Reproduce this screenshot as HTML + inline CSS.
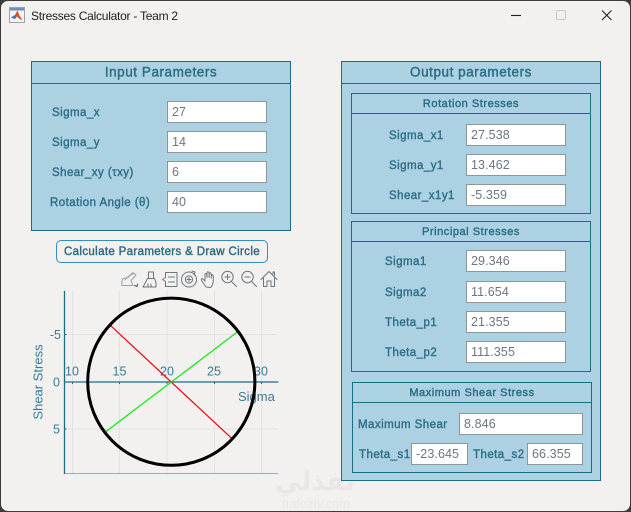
<!DOCTYPE html>
<html><head><meta charset="utf-8">
<style>
html,body{margin:0;padding:0;width:631px;height:512px;overflow:hidden;background:#3c3c3c}
#win{position:absolute;left:1px;top:1px;width:629px;height:510px;background:#f3f0f0;border-radius:7px;overflow:hidden}
#root{position:absolute;left:0;top:0;width:631px;height:512px;font-family:"Liberation Sans",sans-serif}
.p{position:absolute;background:#abd1e2;border:1px solid #1b6c85;box-sizing:border-box}
.l{position:absolute;background:#1b6c85;height:1px}
.t{position:absolute;color:#2a6c84;font-weight:normal;-webkit-text-stroke:.4px #2a6c84;letter-spacing:.55px;white-space:nowrap;text-align:center;transform:translateY(-50%);margin-top:.5px}
.big{margin-top:-.5px}
.lb{position:absolute;color:#2f6f88;font-size:11.500px;font-weight:normal;-webkit-text-stroke:.4px #2f6f88;letter-spacing:.45px;white-space:nowrap;transform:translateY(-50%);margin-top:1px}
.i{position:absolute;background:#fff;border:1px solid #8f9696;box-sizing:border-box;color:#6a7780;font-size:12.500px;letter-spacing:.1px;line-height:20px;padding-left:4px;height:22px;white-space:nowrap}
</style></head>
<body>
<div id="win"></div>
<div id="root">
<svg style="position:absolute;left:9px;top:7px" width="16" height="16" viewBox="0 0 16 16">
<rect x=".5" y=".5" width="15" height="15" fill="#f4f6f8" stroke="#9aa3ad"/>
<rect x="1" y="1" width="14" height="2.500" fill="#6f8fb5"/>
<path d="M2 10.500 6 8l2.500-4.500 2 5 3 5-3-1.500L8 9.500 6 12z" fill="#d9541e"/>
<path d="M2 10.500 6 8l1.500 1.500L6 12z" fill="#3f79ad"/>
</svg>
<div style="position:absolute;left:31px;top:9px;font-size:12px;letter-spacing:-.25px;line-height:14px;color:#1c1c1c;white-space:nowrap">Stresses Calculator - Team 2</div>
<svg style="position:absolute;left:505px;top:5px" width="125" height="22" viewBox="505 5 125 22">
<path d="M511 15.500h10" stroke="#222" stroke-width="1.100"/>
<rect x="556.500" y="10.500" width="9" height="9" rx="1" fill="none" stroke="#c9c7c7"/>
<path d="M602 10.500 611.500 20M611.500 10.500 602 20" stroke="#222" stroke-width="1.100"/>
</svg>

<div class="p" style="left:31px;top:61px;width:260px;height:170px"></div>
<div class="l" style="left:31px;top:83px;width:260px"></div>
<div class="t big" style="left:31px;top:72px;width:260px;font-size:13.500px">Input Parameters</div>
<div class="lb" style="left:52px;top:112px">Sigma_x</div>
<div class="lb" style="left:52px;top:142px">Sigma_y</div>
<div class="lb" style="left:52px;top:172px">Shear_xy (τxy)</div>
<div class="lb" style="left:50px;top:202px">Rotation Angle (θ)</div>
<div class="i" style="left:167px;top:101px;width:100px">27</div>
<div class="i" style="left:167px;top:131px;width:100px">14</div>
<div class="i" style="left:167px;top:161px;width:100px">6</div>
<div class="i" style="left:167px;top:191px;width:100px">40</div>

<div style="position:absolute;left:56px;top:240px;width:212px;height:23px;box-sizing:border-box;border:1px solid #2f8fc4;border-radius:5px;background:#f3f0f0;color:#2a6c84;font-size:11.500px;font-weight:normal;-webkit-text-stroke:.4px #2a6c84;letter-spacing:.35px;line-height:22px;text-align:center;white-space:nowrap">Calculate Parameters &amp; Draw Circle</div>

<svg style="position:absolute;left:0;top:0" width="631" height="512" viewBox="0 0 631 512" font-family="Liberation Sans, sans-serif">
<g fill="none" stroke="#6d767c" stroke-width="1" stroke-linecap="round" stroke-linejoin="round">
 <path d="M122 285.500h11l-2-5 5-5.500-3-2.500-5 5-5.500 1.500q-1 3-.5 6.500z" stroke="#9aa2a8"/>
 <path d="M125 280q4-5 8-6" stroke="#9aa2a8"/>
 <path d="M134.500 285.500l2.500 1 .5-2.500" stroke="#555"/>
 <path d="M148.500 272h5v6.500h-5zM147.500 278.500h7l1.500 4v4.500h-13l2.500-4.500zM148 287v-3M151 287v-3" />
 <path d="M165.500 272.500h11.500v14h-11.500v-5l-3-2 3-2zM168.500 277h6M168.500 282h6"/>
 <circle cx="189" cy="279.500" r="7.500"/>
 <circle cx="189" cy="279.500" r="3.600"/>
 <path d="M187 279.500h4M189 277.500v4M192 271l3 1-1 3"/>
 <path d="M206 287l-4.500-6.500q-.8-2 1.200-1.800l2.300 2.300v-6.500q.6-1.700 1.800 0l.2 3v-5q.7-1.500 2 0l.2 5v-4q.8-1.500 2 0l.2 4.500v-2.500q.9-1.400 1.900 0v6q-.6 3.500-2.500 6z"/>
 <circle cx="227.500" cy="277" r="5.700"/>
 <path d="M231.500 281.500l5 5M225 277h5M227.500 274.500v5"/>
 <circle cx="247.500" cy="277" r="5.700"/>
 <path d="M251.500 281.500l5 5M245 277h5"/>
 <path d="M261 279.500l8-8 8 8M263.500 278v8.500h3.500v-5.500h4v5.500h3.500V278M273 274v-2h1.500v3.500"/>
</g>
<g stroke="#dfe3e7" stroke-width="1">
 <path d="M72.500 291v183M119.500 291v183M167 291v183M214.500 291v183M261.500 291v183M65 334.500h213M65 429h213"/>
</g>
<g stroke="#8fb0c0" stroke-width="1"><path d="M65 473.500h213"/></g>
<g stroke="#1b6c85" stroke-width="1.300"><path d="M64.500 291v183M64.500 382h214"/></g>
<g stroke="#1b6c85" stroke-width="1"><path d="M72.500 382v2M119.500 382v2M167 382v2M214.500 382v2M261.500 382v2M64.500 334.500h2M64.500 429h2"/></g>
<g font-size="12.500" fill="#3a7c94" text-anchor="middle">
 <text x="72" y="375.500">10</text><text x="119.500" y="375.500">15</text><text x="167" y="375.500">20</text><text x="214" y="375.500">25</text><text x="261" y="375.500">30</text>
</g>
<g font-size="12.500" fill="#3a7c94" text-anchor="end">
 <text x="61" y="339">-5</text><text x="60" y="386.500">0</text><text x="60" y="433.500">5</text>
</g>
<text x="238" y="401" font-size="13" fill="#3a7c94">Sigma</text>
<text transform="translate(42.500,382) rotate(-90)" text-anchor="middle" font-size="13" fill="#2f7f9a">Shear Stress</text>
<path d="M110.700 325.700 231.700 438.300" stroke="#f01010" stroke-width="1.300" fill="none"/>
<path d="M105 432.300 237.300 332" stroke="#14ee14" stroke-width="1.300" fill="none"/>
<circle cx="171.300" cy="381.700" r="83.600" fill="none" stroke="#000" stroke-width="3"/>
<text x="315" y="490" text-anchor="middle" font-size="26" font-weight="bold" fill="#e8e6e6" font-family="DejaVu Sans, sans-serif">نفذلي</text>
<text x="316" y="508" text-anchor="middle" font-size="13" fill="#e8e6e6">nafezly.com</text>
</svg>

<div class="p" style="left:341px;top:61px;width:260px;height:420px"></div>
<div class="l" style="left:341px;top:83px;width:260px"></div>
<div class="t big" style="left:341px;top:72px;width:260px;font-size:13.500px">Output parameters</div>

<div class="p" style="left:351px;top:93px;width:240px;height:121px"></div>
<div class="l" style="left:351px;top:113px;width:240px"></div>
<div class="t" style="left:351px;top:103px;width:240px;font-size:11px">Rotation Stresses</div>
<div class="lb" style="left:389px;top:135px">Sigma_x1</div>
<div class="lb" style="left:389px;top:165px">Sigma_y1</div>
<div class="lb" style="left:389px;top:195px">Shear_x1y1</div>
<div class="i" style="left:466px;top:124px;width:100px">27.538</div>
<div class="i" style="left:466px;top:154px;width:100px">13.462</div>
<div class="i" style="left:466px;top:184px;width:100px">-5.359</div>

<div class="p" style="left:351px;top:221px;width:240px;height:151px"></div>
<div class="l" style="left:351px;top:241px;width:240px"></div>
<div class="t" style="left:351px;top:231px;width:240px;font-size:11px">Principal Stresses</div>
<div class="lb" style="left:385px;top:261px">Sigma1</div>
<div class="lb" style="left:385px;top:292px">Sigma2</div>
<div class="lb" style="left:385px;top:322px">Theta_p1</div>
<div class="lb" style="left:385px;top:352px">Theta_p2</div>
<div class="i" style="left:466px;top:250px;width:100px">29.346</div>
<div class="i" style="left:466px;top:281px;width:100px">11.654</div>
<div class="i" style="left:466px;top:311px;width:100px">21.355</div>
<div class="i" style="left:466px;top:341px;width:100px">111.355</div>

<div class="p" style="left:352px;top:382px;width:240px;height:91px"></div>
<div class="l" style="left:352px;top:402px;width:240px"></div>
<div class="t" style="left:352px;top:392px;width:240px;font-size:11px">Maximum Shear Stress</div>
<div class="lb" style="left:358px;top:424px">Maximum Shear</div>
<div class="lb" style="left:359px;top:454px">Theta_s1</div>
<div class="lb" style="left:473px;top:454px">Theta_s2</div>
<div class="i" style="left:459px;top:413px;width:124px">8.846</div>
<div class="i" style="left:411px;top:443px;width:57px">-23.645</div>
<div class="i" style="left:527px;top:443px;width:56px">66.355</div>
</div>
</body></html>
